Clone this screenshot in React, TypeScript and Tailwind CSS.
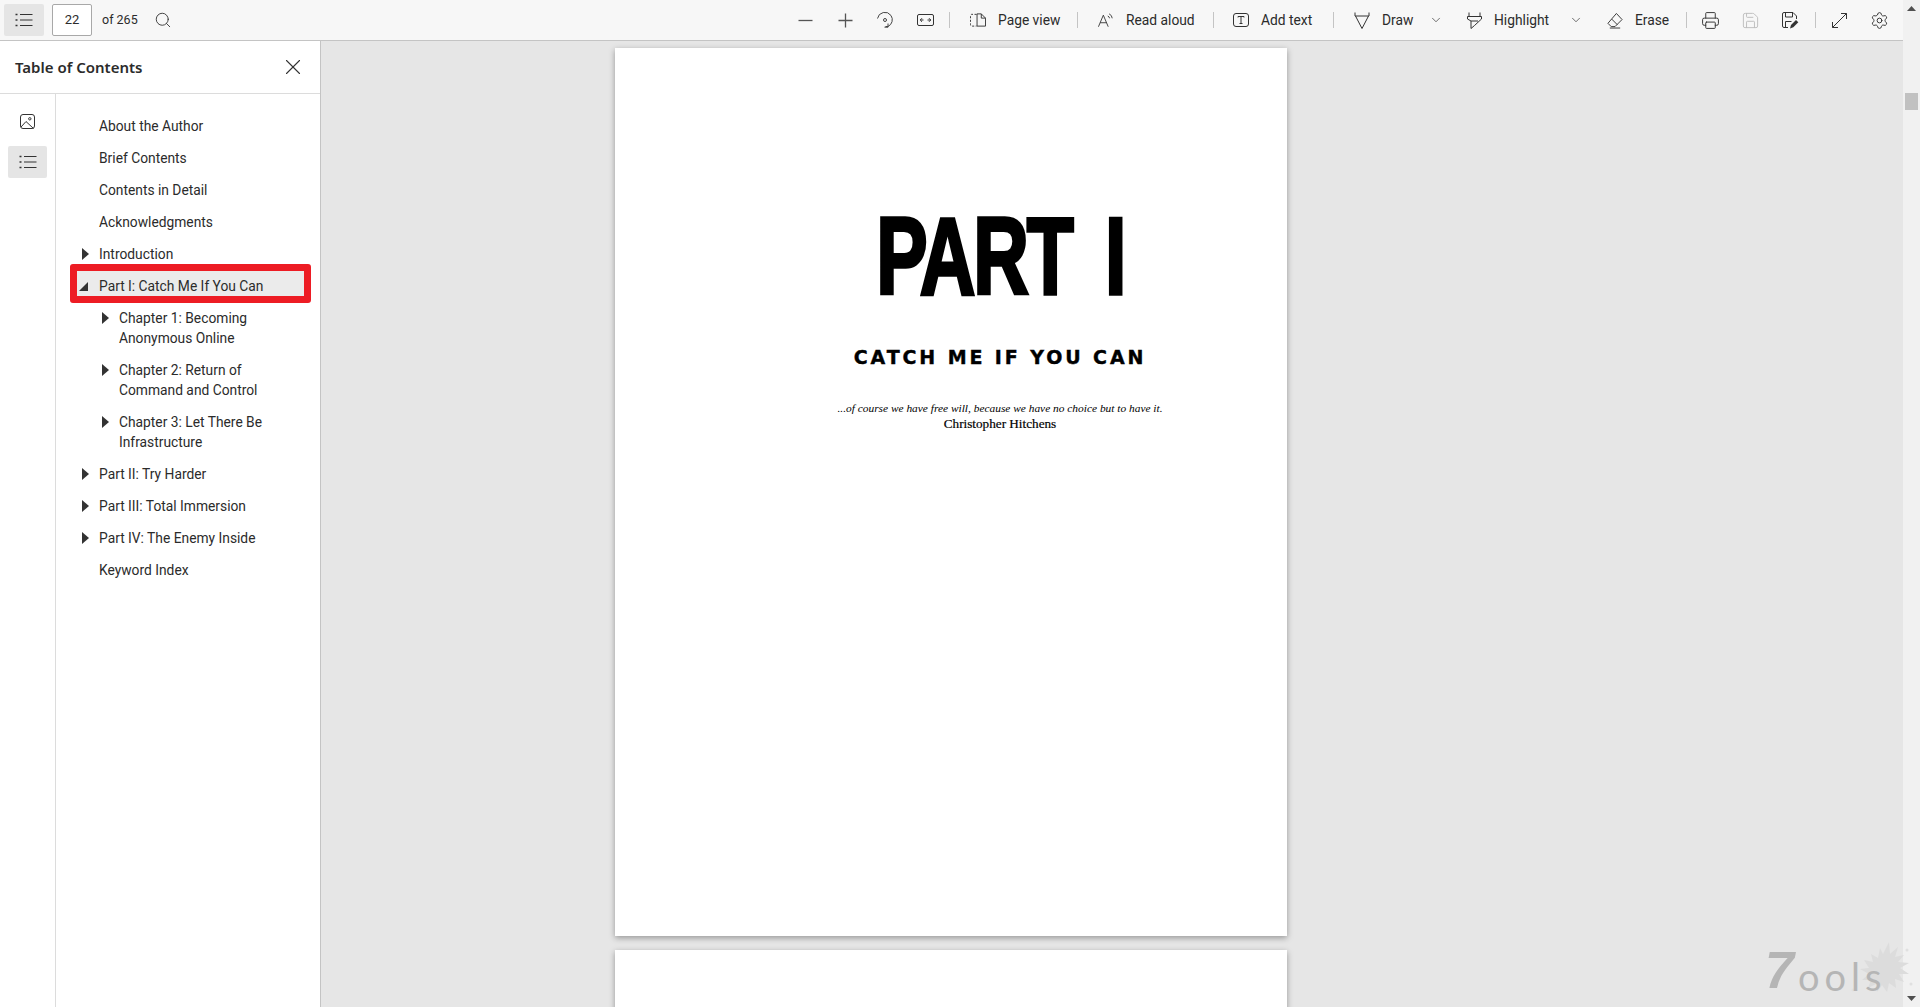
import { ReactNode } from 'react';
import { ChevronDown, Printer, Save, Search, Settings, X } from 'lucide-react';

const ListIcon = () => (
  <svg width="18" height="14" viewBox="0 0 18 14" fill="none" stroke="#333" strokeWidth="1">
    <path d="M5 1.5h12.5M5 7h12.5M5 12.5h12.5" />
    <path d="M0.5 1.5h2M0.5 7h2M0.5 12.5h2" strokeWidth="1.6" />
  </svg>
);

const MinusIcon = () => (
  <svg width="15" height="15" viewBox="0 0 15 15" fill="none" stroke="#555" strokeWidth="1.3">
    <path d="M0.5 7.5h14" />
  </svg>
);

const PlusIcon = () => (
  <svg width="15" height="15" viewBox="0 0 15 15" fill="none" stroke="#555" strokeWidth="1.3">
    <path d="M0.5 7.5h14M7.5 0.5v14" />
  </svg>
);

const RotateIcon = () => (
  <svg width="18" height="18" viewBox="0 0 18 18" fill="none" stroke="#444" strokeWidth="1">
    <path d="M1.5 7.5A7.5 7.5 0 0 1 15 4.5 7.5 7.5 0 0 1 12 15.5H9.5" />
    <path d="M12 12.5v3.7H8.5" />
    <circle cx="9" cy="9" r="1.5" />
  </svg>
);

const FitIcon = () => (
  <svg width="17" height="12" viewBox="0 0 17 12" fill="none" stroke="#333" strokeWidth="1">
    <rect x="0.5" y="0.5" width="16" height="11" rx="1.5" />
    <path d="M3.5 6h3M10.5 6h3" />
    <path d="M5 4.2 3.2 6 5 7.8M12 4.2 13.8 6 12 7.8" />
  </svg>
);

const PageViewIcon = () => (
  <svg width="17" height="14" viewBox="0 0 17 14" fill="none" stroke="#333" strokeWidth="1">
    <path d="M7 1H2a1.5 1.5 0 0 0-1.5 1.5V12A1.5 1.5 0 0 0 2 13.5h5" strokeDasharray="2.2 1.6" />
    <path d="M7.5 0.5H12L16.5 5v8.5h-9z" />
    <path d="M12 0.5V5h4.5" />
  </svg>
);

const ReadAloudIcon = () => (
  <svg width="18" height="17" viewBox="0 0 18 17" fill="none" stroke="#333" strokeWidth="1">
    <path d="M0.5 15.5 6 2.5l5.5 13M2.4 11h7.2" />
    <path d="M11 3.5a3 3 0 0 1 2 2.5M12.5 1a6 6 0 0 1 3.5 5" />
  </svg>
);

const AddTextIcon = () => (
  <svg width="16" height="14" viewBox="0 0 16 14" fill="none" stroke="#333" strokeWidth="1">
    <rect x="0.5" y="0.5" width="15" height="13" rx="2.5" />
    <path d="M5 4.5V3.5h6v1M8 3.5v7M6.5 10.5h3" />
  </svg>
);

const DrawIcon = () => (
  <svg width="16" height="17" viewBox="0 0 16 17" fill="none" stroke="#333" strokeWidth="1">
    <path d="M1 0.5v3.5h14V0.5" />
    <path d="M1.5 4 8 16.5 14.5 4" />
  </svg>
);

const HighlightIcon = () => (
  <svg width="15" height="17" viewBox="0 0 15 17" fill="none" stroke="#333" strokeWidth="1">
    <path d="M2 0.5v4h11v-4" />
    <path d="M0.5 4.5h14v2.5l-7 6.5-3.5 3V9L.5 7z" />
    <path d="M4 9h7" />
  </svg>
);

const EraseIcon = () => (
  <svg width="17" height="17" viewBox="0 0 17 17" fill="none" stroke="#333" strokeWidth="1">
    <path d="M10 1 16 7.5 8.5 15H4.5L1 11.5z" />
    <path d="M5 7 11 13" />
    <path d="M3 16.5h11" />
  </svg>
);

const SaveAsIcon = () => (
  <svg width="17" height="17" viewBox="0 0 17 17" fill="none" stroke="#333" strokeWidth="1">
    <path d="M6 15.5H2A1.5 1.5 0 0 1 .5 14V2A1.5 1.5 0 0 1 2 .5h9L14.5 4v3" />
    <path d="M3.5 .5v4.5h7V.5M3.5 15V9.5h6" />
    <path d="M8 16.5l1-3.5 5-5 2.3 2.3-5 5z" fill="#333" stroke="none" />
  </svg>
);

const ExpandIcon = () => (
  <svg width="15" height="15" viewBox="0 0 15 15" fill="none" stroke="#333" strokeWidth="1">
    <path d="M9 0.5h5.5V6M14.5 0.5l-14 14M0.5 9v5.5H6" />
  </svg>
);

const ImageIcon = () => (
  <svg width="15" height="15" viewBox="0 0 15 15" fill="none" stroke="#333" strokeWidth="1">
    <rect x="0.5" y="0.5" width="14" height="14" rx="2.5" />
    <circle cx="9.8" cy="4.8" r="1.2" />
    <path d="M1 13 6 7.5l7.5 7" />
  </svg>
);

const Sep = ({ className = '' }: { className?: string }) => (
  <div className={`w-px h-[16px] bg-[#c4c4c4] ${className}`} />
);

const IconBtn = ({ children, className = '' }: { children: ReactNode; className?: string }) => (
  <div className={`w-10 h-8 flex items-center justify-center ${className}`}>{children}</div>
);

const ToolBtn = ({ icon, label, className, chevron = false }: { icon: ReactNode; label: string; className: string; chevron?: boolean }) => (
  <div className={`h-8 flex items-center ${className}`}>
    <div className="w-4 flex items-center justify-center shrink-0">{icon}</div>
    <span className="ml-[12px] text-[13.8px] text-[#2b2b2b] whitespace-nowrap">{label}</span>
    {chevron && <ChevronDown size={14} strokeWidth={1.2} color="#333" className="ml-auto" />}
  </div>
);

const Arrow = ({ open = false }: { open?: boolean }) =>
  open ? (
    <svg width="9" height="9" viewBox="0 0 9 9" className="ml-[1px] mr-[12px] shrink-0"><path d="M9 0v9H0z" fill="#333" /></svg>
  ) : (
    <svg width="7" height="12" viewBox="0 0 7 12" className="ml-[4px] mr-[11px] shrink-0"><path d="M0 0 7 6 0 12z" fill="#333" /></svg>
  );

const Row = ({ label, arrow = false }: { label: string; arrow?: boolean }) => (
  <div className="h-8 flex items-center pl-[78px] text-[13.8px] leading-5">
    {arrow ? <Arrow /> : <div className="w-[22px] shrink-0" />}
    <span className="-ml-px">{label}</span>
  </div>
);

const Chapter = ({ first, second }: { first: string; second: string }) => (
  <div className="flex items-start py-[6px] pl-[98px] text-[13.8px] leading-5">
    <div className="h-5 flex items-center"><Arrow /></div>
    <span className="-ml-px">{first}<br />{second}</span>
  </div>
);

const Scrollbar = () => (
  <div className="w-[17px] shrink-0 bg-[#f1f1f1] flex flex-col items-center">
    <div className="h-[17px] flex items-center justify-center">
      <svg width="9" height="5" viewBox="0 0 9 5"><path d="M4.5 0 9 5H0z" fill="#505050" /></svg>
    </div>
    <div className="w-[13px] h-[17px] mt-[76px] bg-[#c1c1c1]" />
    <div className="flex-1" />
    <div className="h-[17px] flex items-center justify-center">
      <svg width="9" height="5" viewBox="0 0 9 5"><path d="M0 0h9L4.5 5z" fill="#505050" /></svg>
    </div>
  </div>
);

const Watermark = () => (
  <div className="absolute left-[1765px] top-[940px] w-[150px] h-[67px] pointer-events-none">
    <svg width="70" height="62" viewBox="0 0 70 62" className="absolute left-[80px] top-0">
      <path d="M35 8l3 6 6-12 1 12 8-7-3 10 9-2-6 7 11 1-9 5 9 6-10 0 5 8-9-3 1 9-7-5-2 9-5-7-5 7-1-8-8 4 3-8-9 0 7-6-9-5 9-1-5-8 9 2-2-8 7 4z" fill="#dcdcdc" />
      <circle cx="62" cy="10" r="1.5" fill="#e0e0e0" />
      <circle cx="8" cy="50" r="1.5" fill="#e0e0e0" />
      <circle cx="66" cy="44" r="1.5" fill="#e0e0e0" />
    </svg>
    <span className="absolute left-0 top-[4px] text-[52px] leading-none font-bold italic text-[#b5b5b5] [font-family:'Liberation_Sans',sans-serif]">7</span>
    <span className="absolute left-[33px] top-[17px] text-[38px] leading-none tracking-[5px] text-[#b5b5b5] [font-family:'Lato',sans-serif]">ools</span>
  </div>
);

export default function App() {
  return (
    <div className="relative w-screen h-screen overflow-hidden flex text-[#2b2b2b] [font-family:'Roboto',sans-serif]">
      <div className="flex-1 min-w-0 flex flex-col">
        {/* Toolbar */}
        <div className="h-[41px] shrink-0 bg-[#f7f7f7] border-b border-[#c4c4c4] flex items-center pr-1">
          <div className="ml-1 w-10 h-8 rounded-[2px] bg-[#e5e5e5] flex items-center justify-center"><ListIcon /></div>
          <div className="ml-2 w-10 h-8 rounded-[2px] border border-[#a8a8a8] bg-white flex items-center justify-center text-[13px]">22</div>
          <span className="ml-[10px] text-[12.5px] whitespace-nowrap">of 265</span>
          <Search size={18} strokeWidth={1.2} color="#333" className="ml-[16px]" />

          <div className="ml-auto flex items-center">
            <IconBtn><MinusIcon /></IconBtn>
            <IconBtn><PlusIcon /></IconBtn>
            <IconBtn><RotateIcon /></IconBtn>
            <IconBtn><FitIcon /></IconBtn>
            <Sep className="ml-1" />
            <ToolBtn icon={<PageViewIcon />} label="Page view" className="w-[127px] pl-5" />
            <Sep />
            <ToolBtn icon={<ReadAloudIcon />} label="Read aloud" className="w-[135px] pl-5" />
            <Sep />
            <ToolBtn icon={<AddTextIcon />} label="Add text" className="w-[119px] pl-[19px]" />
            <Sep />
            <ToolBtn icon={<DrawIcon />} label="Draw" className="w-[112px] pl-5 pr-[3px]" chevron />
            <ToolBtn icon={<HighlightIcon />} label="Highlight" className="w-[144px] pl-5 pr-[7px]" chevron />
            <ToolBtn icon={<EraseIcon />} label="Erase" className="w-[96px] pl-[17px]" />
            <Sep />
            <IconBtn className="ml-[3px]"><Printer size={19} strokeWidth={1.2} color="#333" /></IconBtn>
            <IconBtn><Save size={19} strokeWidth={1.2} color="#bdbdbd" /></IconBtn>
            <IconBtn><SaveAsIcon /></IconBtn>
            <Sep className="ml-[5px]" />
            <IconBtn className="ml-[3px]"><ExpandIcon /></IconBtn>
            <IconBtn><Settings size={19} strokeWidth={1.2} color="#333" /></IconBtn>
          </div>
        </div>

        <div className="flex-1 min-h-0 flex">
          {/* Sidebar */}
          <div className="relative w-[321px] shrink-0 bg-white border-r border-[#c4c4c4] flex flex-col">
            <div className="h-[53px] shrink-0 border-b border-[#dcdcdc] flex items-center justify-between pl-[15px] pr-[14px]">
              <h2 className="text-[15px] font-semibold [font-family:'Noto_Sans',sans-serif]">Table of Contents</h2>
              <X size={26} strokeWidth={1} color="#333" />
            </div>
            <div className="flex-1 flex min-h-0 relative">
              <div className="absolute left-0 top-0 bottom-0 w-[56px] border-r border-[#dcdcdc] px-2 pt-[11px] flex flex-col gap-[9px]">
                <div className="h-8 flex items-center justify-center"><ImageIcon /></div>
                <div className="h-8 rounded-[2px] bg-[#e5e5e5] flex items-center justify-center"><ListIcon /></div>
              </div>
              <div className="flex-1 pt-[16px] min-w-0">
                <Row label="About the Author" />
                <Row label="Brief Contents" />
                <Row label="Contents in Detail" />
                <Row label="Acknowledgments" />
                <Row label="Introduction" arrow />
                {/* highlighted entry with the red annotation frame */}
                <div className="relative h-8 flex items-center pl-[78px] text-[13.8px] leading-5">
                  <div className="absolute left-[70px] right-[9px] top-[-6px] h-[39px] rounded-[3px] border-[7px] border-[#ed1c24] bg-[#ebebeb]" />
                  <div className="relative flex items-center">
                    <Arrow open />
                    <span className="-ml-px">Part I: Catch Me If You Can</span>
                  </div>
                </div>
                <Chapter first="Chapter 1: Becoming" second="Anonymous Online" />
                <Chapter first="Chapter 2: Return of" second="Command and Control" />
                <Chapter first="Chapter 3: Let There Be" second="Infrastructure" />
                <Row label="Part II: Try Harder" arrow />
                <Row label="Part III: Total Immersion" arrow />
                <Row label="Part IV: The Enemy Inside" arrow />
                <Row label="Keyword Index" />
              </div>
            </div>
          </div>

          {/* Document pages */}
          <div className="flex-1 min-w-0 bg-[#e6e6e6] overflow-hidden pt-[7px] pl-[294px]">
            <div className="w-[672px] h-[888px] bg-white shadow-[0_2px_6px_rgba(0,0,0,0.35)] flex flex-col items-center pl-[98px] pt-[149px] text-black">
              <div className="text-[110px] leading-[118px] font-bold tracking-[-3px] [word-spacing:20px] scale-x-[0.7] [font-family:'Liberation_Sans',sans-serif] [-webkit-text-stroke:3.5px_black]">PART I</div>
              <div className="mt-[30px] text-[19px] leading-6 font-bold tracking-[2.9px] [font-family:'DejaVu_Sans',sans-serif] [-webkit-text-stroke:0.4px_black]">CATCH ME IF YOU CAN</div>
              <div className="mt-[31px] text-[11.4px] leading-4 italic [font-family:'Liberation_Serif',serif]">...of course we have free will, because we have no choice but to have it.</div>
              <div className="text-[13.2px] leading-4 [font-family:'Liberation_Serif',serif] [-webkit-text-stroke:0.2px_black]">Christopher Hitchens</div>
            </div>
            <div className="w-[672px] h-[888px] mt-[14px] bg-white shadow-[0_2px_6px_rgba(0,0,0,0.35)]" />
          </div>
        </div>
      </div>
      <Scrollbar />
      <Watermark />
    </div>
  );
}
